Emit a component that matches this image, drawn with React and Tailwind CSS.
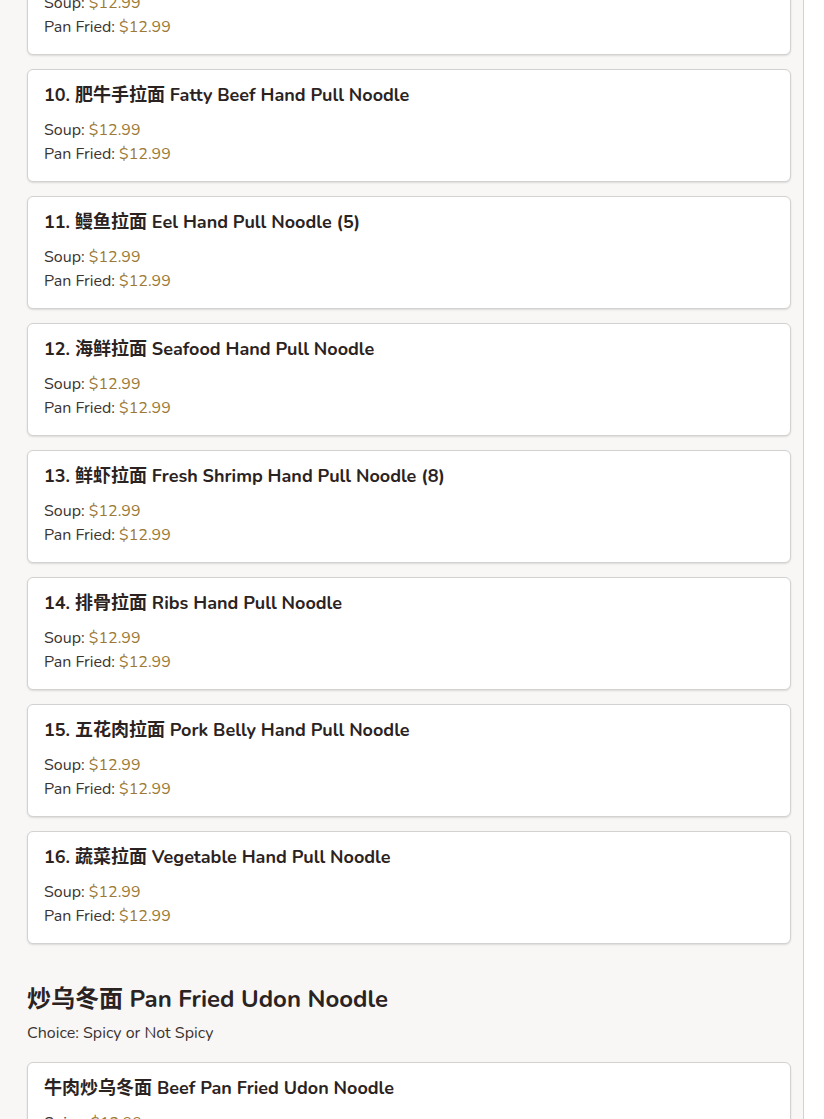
const items = [
  { n: "9.", zh: "", en: "" },
  { n: "10.", zh: "肥牛手拉面", en: "Fatty Beef Hand Pull Noodle" },
  { n: "11.", zh: "鳗鱼拉面", en: "Eel Hand Pull Noodle (5)" },
  { n: "12.", zh: "海鲜拉面", en: "Seafood Hand Pull Noodle" },
  { n: "13.", zh: "鲜虾拉面", en: "Fresh Shrimp Hand Pull Noodle (8)" },
  { n: "14.", zh: "排骨拉面", en: "Ribs Hand Pull Noodle" },
  { n: "15.", zh: "五花肉拉面", en: "Pork Belly Hand Pull Noodle" },
  { n: "16.", zh: "蔬菜拉面", en: "Vegetable Hand Pull Noodle" },
];

const Price = ({ label, value }) => (
  <p className="text-base leading-6 text-[#3b3431]">
    {label}: <span className="text-[#9c7a36]">{value}</span>
  </p>
);

const Card = ({ title, first, rows }) => (
  <div
    className={
      "bg-white border border-[#d4d2d0] rounded-md shadow-[0_1px_2px_rgba(0,0,0,0.12)] px-4 pt-[14px] pb-[15px] " +
      (first ? "mt-[-58px]" : "")
    }
  >
    <h3 className="text-lg leading-[22px] font-bold text-[#2b2322] mb-3">{title}</h3>
    {rows.map((r) => (
      <Price key={r[0]} label={r[0]} value={r[1]} />
    ))}
  </div>
);

const App = () => {
  const rows = [
    ["Soup", "$12.99"],
    ["Pan Fried", "$12.99"],
  ];

  return (
    <div
      className="min-h-screen w-full bg-white overflow-hidden"
      style={{ fontFamily: "Nunito, Lato, 'Noto Sans CJK SC', sans-serif" }}
    >
      <div className="w-[804px] min-h-screen bg-[#f8f7f6] border-r border-[#d3d3d3] pl-[27px] pr-[12px] pb-10">
        <div className="flex flex-col gap-[14px]">
          {items.map((it, i) => (
            <Card
              key={it.n}
              first={i === 0}
              title={it.n + " " + it.zh + " " + it.en}
              rows={rows}
            />
          ))}
        </div>

        <h2 className="mt-[39px] text-2xl leading-8 font-bold text-[#2b2322]">
          炒乌冬面 Pan Fried Udon Noodle
        </h2>
        <p className="mt-[6px] text-base leading-6 text-[#3b3431]">Choice: Spicy or Not Spicy</p>

        <div className="mt-[17px] flex flex-col gap-[14px]">
          <Card title="牛肉炒乌冬面 Beef Pan Fried Udon Noodle" rows={[["Spicy", "$12.99"], ["Not Spicy", "$12.99"]]} />
        </div>
      </div>
    </div>
  );
};

export default App;
